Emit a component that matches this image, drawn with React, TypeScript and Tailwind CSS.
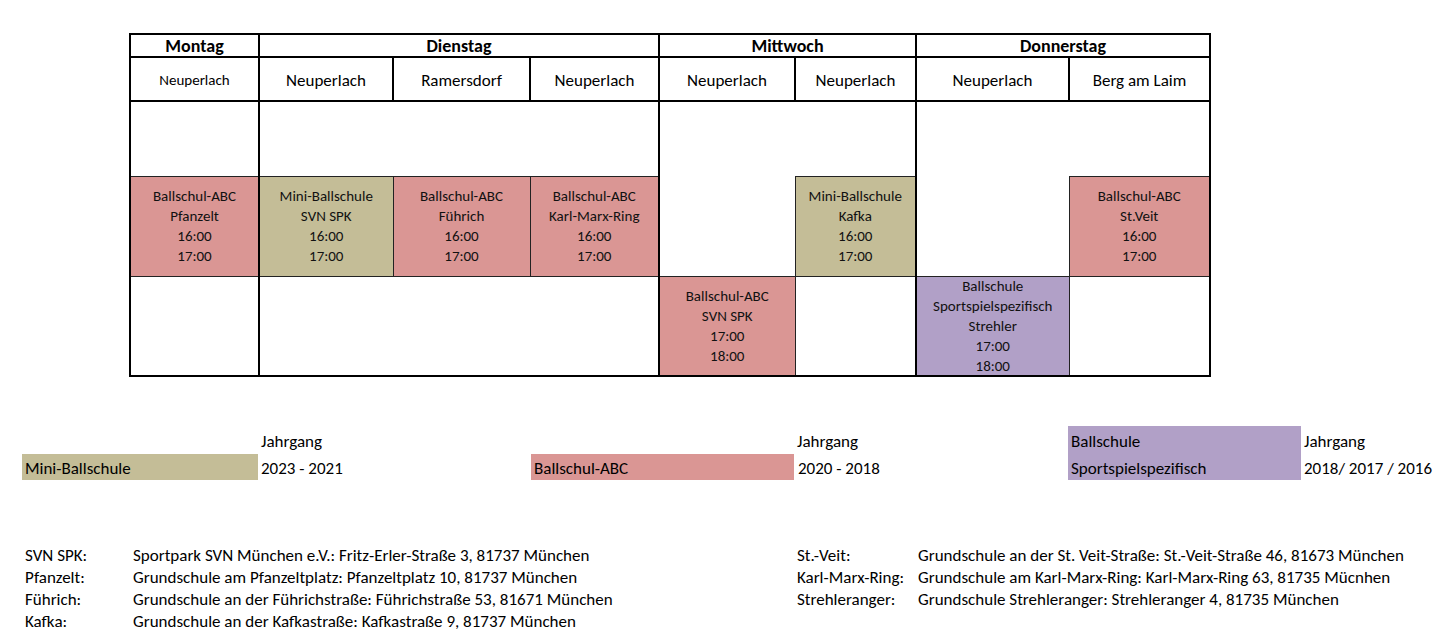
import React from "react";

const FONT = "font-['Carlito','Calibri','Liberation_Sans_Narrow','Liberation_Sans',sans-serif]";

// borders: K = thick black, t = thin
const TK = "border-t-2 border-t-black";
const BK = "border-b-2 border-b-black";
const LK = "border-l-2 border-l-black";
const RK = "border-r-2 border-r-black";
const THIN = "border border-[#222]";

const PINK = "bg-[#da9694]";
const TAN = "bg-[#c4bd97]";
const PURPLE = "bg-[#b1a0c7]";

const cols = [129, 134, 137, 129, 136, 121, 153, 141];

function Slot({ lines, tight }: { lines: string[]; tight?: boolean }) {
  return (
    <div
      className={`flex flex-col items-center justify-center text-[15px] leading-[20px] text-[#111] ${
        tight ? "-my-[2px]" : ""
      }`}
    >
      {lines.map((l, i) => (
        <span key={i}>{l}</span>
      ))}
    </div>
  );
}

function Timetable() {
  return (
    <table className="ml-[129px] table-fixed border-collapse text-center">
      <colgroup>
        {cols.map((w, i) => (
          <col key={i} style={{ width: w }} />
        ))}
      </colgroup>
      <tbody>
        {/* day headers */}
        <tr className="h-[23px] text-[18px] font-bold leading-none">
          <td className={`${TK} ${BK} ${LK} ${RK} p-0`}>Montag</td>
          <td colSpan={3} className={`${TK} ${BK} ${LK} ${RK} p-0`}>Dienstag</td>
          <td colSpan={2} className={`${TK} ${BK} ${LK} ${RK} p-0`}>Mittwoch</td>
          <td colSpan={2} className={`${TK} ${BK} ${LK} ${RK} p-0`}>Donnerstag</td>
        </tr>

        {/* locations */}
        <tr className="h-[44px] text-[17px]">
          <td className={`${TK} ${BK} ${LK} ${RK} p-0 pt-[2px] text-[15px]`}>Neuperlach</td>
          {["Neuperlach", "Ramersdorf", "Neuperlach", "Neuperlach", "Neuperlach", "Neuperlach", "Berg am Laim"].map(
            (n, i) => (
              <td key={i} className={`${TK} ${BK} ${LK} ${RK} p-0 pt-[3px]`}>
                {n}
              </td>
            )
          )}
        </tr>

        {/* empty */}
        <tr className="h-[75px]">
          <td className={`${LK} ${RK} p-0`} />
          <td colSpan={3} className={`${LK} ${RK} p-0`} />
          <td colSpan={2} className={`${LK} ${RK} p-0`} />
          <td colSpan={2} className={`${LK} ${RK} p-0`} />
        </tr>

        {/* 16:00 slots */}
        <tr className="h-[100px]">
          <td className={`${THIN} ${PINK} ${LK} ${RK} p-0`}>
            <Slot lines={["Ballschul-ABC", "Pfanzelt", "16:00", "17:00"]} />
          </td>
          <td className={`${THIN} ${TAN} ${LK} p-0`}>
            <Slot lines={["Mini-Ballschule", "SVN SPK", "16:00", "17:00"]} />
          </td>
          <td className={`${THIN} ${PINK} p-0`}>
            <Slot lines={["Ballschul-ABC", "Führich", "16:00", "17:00"]} />
          </td>
          <td className={`${THIN} ${PINK} ${RK} p-0`}>
            <Slot lines={["Ballschul-ABC", "Karl-Marx-Ring", "16:00", "17:00"]} />
          </td>
          <td className={`${LK} p-0`} />
          <td className={`${THIN} ${TAN} ${RK} p-0`}>
            <Slot lines={["Mini-Ballschule", "Kafka", "16:00", "17:00"]} />
          </td>
          <td className={`${LK} p-0`} />
          <td className={`${THIN} ${PINK} ${RK} p-0`}>
            <Slot lines={["Ballschul-ABC", "St.Veit", "16:00", "17:00"]} />
          </td>
        </tr>

        {/* 17:00 slots */}
        <tr className="h-[100px]">
          <td className={`${LK} ${RK} ${BK} p-0`} />
          <td colSpan={3} className={`${LK} ${RK} ${BK} p-0`} />
          <td className={`${THIN} ${PINK} ${LK} ${BK} p-0`}>
            <Slot lines={["Ballschul-ABC", "SVN SPK", "17:00", "18:00"]} />
          </td>
          <td className={`${RK} ${BK} p-0`} />
          <td className={`${THIN} ${PURPLE} ${LK} ${BK} p-0`}>
            <Slot tight lines={["Ballschule", "Sportspielspezifisch", "Strehler", "17:00", "18:00"]} />
          </td>
          <td className={`${RK} ${BK} p-0`} />
        </tr>
      </tbody>
    </table>
  );
}

function Legend() {
  return (
    <div className="mt-[49px] grid grid-cols-[22px_236px_273px_263px_274px_233px_1fr] grid-rows-[27px_27px] text-[17px] leading-[27px]">
      {/* row 1 */}
      <div />
      <div />
      <div className="pl-[3px] pt-[2px]">Jahrgang</div>
      <div />
      <div className="pl-[3px] pt-[2px]">Jahrgang</div>
      <div className={`${PURPLE} pl-[3px] pt-[2px]`}>Ballschule</div>
      <div className="pl-[3px] pt-[2px]">Jahrgang</div>
      {/* row 2 */}
      <div />
      <div className={`${TAN} mt-[1px] pl-[3px] pt-[1px]`}>Mini-Ballschule</div>
      <div className="pl-[3px] pt-[2px]">2023 - 2021</div>
      <div className={`${PINK} mt-[1px] pl-[3px] pt-[1px]`}>Ballschul-ABC</div>
      <div className="pl-[4px] pt-[2px]">2020 - 2018</div>
      <div className={`${PURPLE} pl-[3px] pt-[2px]`}>Sportspielspezifisch</div>
      <div className="pl-[3px] pt-[2px]">2018/ 2017 / 2016</div>
    </div>
  );
}

const leftAddr: [string, string][] = [
  ["SVN SPK:", "Sportpark SVN München e.V.: Fritz-Erler-Straße 3, 81737 München"],
  ["Pfanzelt:", "Grundschule am Pfanzeltplatz: Pfanzeltplatz 10, 81737 München"],
  ["Führich:", "Grundschule an der Führichstraße: Führichstraße 53, 81671 München"],
  ["Kafka:", "Grundschule an der Kafkastraße: Kafkastraße 9, 81737 München"],
];

const rightAddr: [string, string][] = [
  ["St.-Veit:", "Grundschule an der St. Veit-Straße: St.-Veit-Straße 46, 81673 München"],
  ["Karl-Marx-Ring:", "Grundschule am Karl-Marx-Ring: Karl-Marx-Ring 63, 81735 Mücnhen"],
  ["Strehleranger:", "Grundschule Strehleranger: Strehleranger 4, 81735 München"],
];

function Addresses() {
  return (
    <div className="mt-[65px] flex text-[17px] leading-[22px]">
      <div className="ml-[25px] grid w-[772px] grid-cols-[108px_1fr] content-start">
        {leftAddr.map(([k, v]) => (
          <React.Fragment key={k}>
            <span>{k}</span>
            <span>{v}</span>
          </React.Fragment>
        ))}
      </div>
      <div className="grid grid-cols-[121px_1fr] content-start">
        {rightAddr.map(([k, v]) => (
          <React.Fragment key={k}>
            <span>{k}</span>
            <span>{v}</span>
          </React.Fragment>
        ))}
      </div>
    </div>
  );
}

export default function App() {
  return (
    <div className={`h-[636px] w-[1444px] overflow-hidden bg-white pt-[33px] text-black ${FONT}`}>
      <Timetable />
      <Legend />
      <Addresses />
    </div>
  );
}
